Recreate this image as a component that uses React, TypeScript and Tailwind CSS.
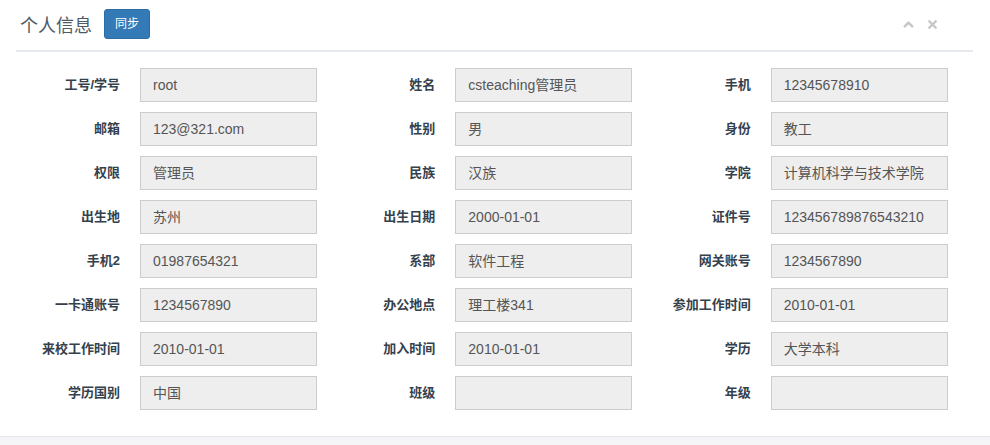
import { ChevronUp, X } from 'lucide-react';

const fields: [string, string][] = [
  ['工号/学号', 'root'],
  ['姓名', 'csteaching管理员'],
  ['手机', '12345678910'],
  ['邮箱', '123@321.com'],
  ['性别', '男'],
  ['身份', '教工'],
  ['权限', '管理员'],
  ['民族', '汉族'],
  ['学院', '计算机科学与技术学院'],
  ['出生地', '苏州'],
  ['出生日期', '2000-01-01'],
  ['证件号', '123456789876543210'],
  ['手机2', '01987654321'],
  ['系部', '软件工程'],
  ['网关账号', '1234567890'],
  ['一卡通账号', '1234567890'],
  ['办公地点', '理工楼341'],
  ['参加工作时间', '2010-01-01'],
  ['来校工作时间', '2010-01-01'],
  ['加入时间', '2010-01-01'],
  ['学历', '大学本科'],
  ['学历国别', '中国'],
  ['班级', ''],
  ['年级', ''],
];

export default function App() {
  return (
    <div
      className="w-[990px] h-[445px] bg-white flex flex-col overflow-hidden"
      style={{ fontFamily: '"Liberation Sans", Arial, "Noto Sans CJK SC", sans-serif' }}
    >
      <div className="flex-1 px-4">
        <div className="flex items-center h-[52px] pb-[2px] border-b-2 border-[#e6e9ed] mr-px pl-1">
          <h2 className="text-[18px] text-[#4e5a66] leading-none pt-[3px]">个人信息</h2>
          <button className="ml-[12px] h-[30px] px-[10px] rounded-[3px] bg-[#337ab7] border border-[#2e6da4] text-white text-[12px]">
            同步
          </button>
          <div className="ml-auto flex items-center gap-[10px] mr-[34px] text-[#c5c7cb]">
            <ChevronUp size={15} strokeWidth={4} />
            <X size={13} strokeWidth={4.5} />
          </div>
        </div>

        <div className="grid grid-cols-3 gap-y-[10px] mt-[16px] w-[946px]">
          {fields.map(([label, value]) => (
            <div key={label} className="flex items-center">
              <label className="w-[104px] text-right text-[13px] font-bold text-[#34414d]">{label}</label>
              <div className="ml-[20px] w-[177px] h-[34px] bg-[#eeeeee] border border-[#cccccc] flex items-center px-3 text-[14px] text-[#555555]">
                {value}
              </div>
            </div>
          ))}
        </div>
      </div>
      <div className="h-[9px] bg-[#f5f5f7] border-t border-[#e6e6ee]" />
    </div>
  );
}
